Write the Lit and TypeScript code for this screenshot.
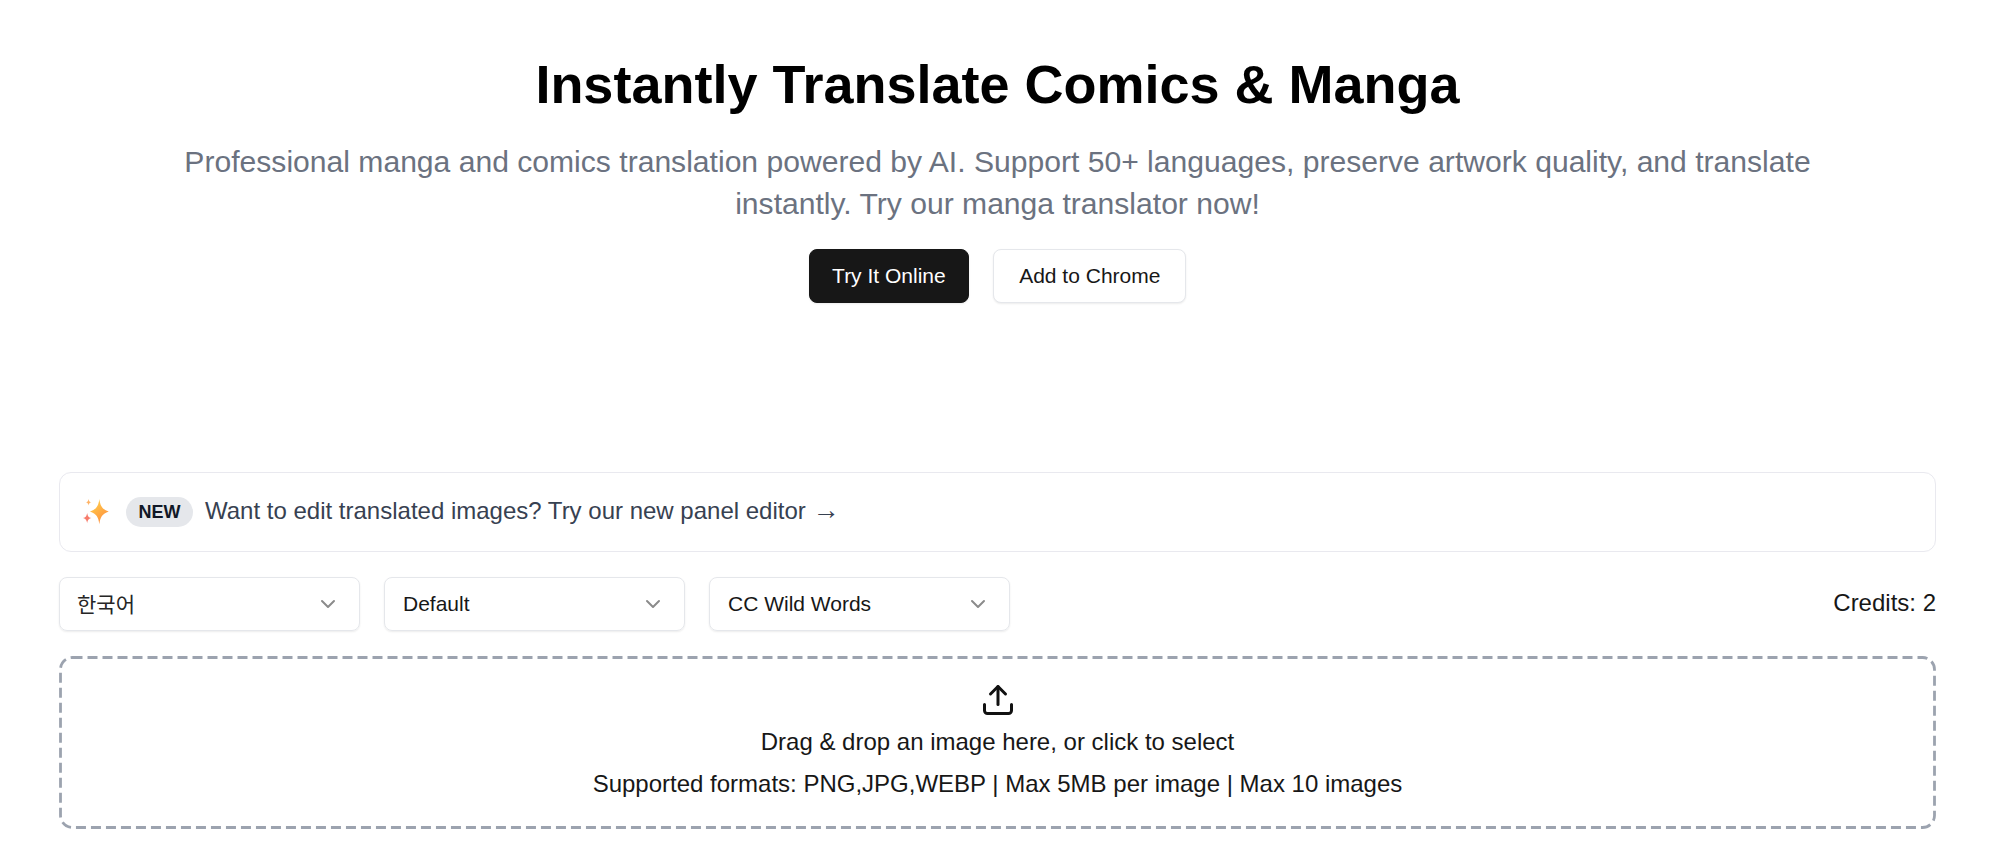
import { LitElement, html, css } from "lit";
import { customElement } from "lit/decorators.js";

const chevron = html`<svg class="chev" viewBox="0 0 24 24" fill="none" stroke="currentColor" stroke-width="2" stroke-linecap="round" stroke-linejoin="round"><path d="m6 9 6 6 6-6"/></svg>`;

@customElement("app-root")
export class AppRoot extends LitElement {
  static styles = css`
    :host { display: block; background: #fff; font-family: "Liberation Sans", Arial, sans-serif; color: #0a0a0a; height: 843px; overflow: hidden; }
    .hero { display: flex; flex-direction: column; align-items: center; padding: 48px 64px 0 59px; height: 472px; box-sizing: border-box; }
    h1 { margin: 0; font-size: 54px; line-height: 72px; font-weight: 700; color: #000; text-align: center; }
    .sub { margin: 21px 0 0; width: 1660px; font-size: 30.1px; line-height: 42px; color: #6b7280; text-align: center; }
    .btns { display: flex; gap: 24px; margin-top: 24px; }
    .btn { height: 54px; box-sizing: border-box; display: flex; align-items: center; border-radius: 8px; font-size: 21px; box-shadow: 0 1px 2px rgba(0,0,0,.08); }
    .primary { background: #171717; color: #fff; border: 1px solid #171717; padding: 0 22.500px; }
    .outline { background: #fff; color: #171717; border: 1px solid #e5e7eb; padding: 0 25px; }
    .main { padding: 0 64px 0 59px; display: flex; flex-direction: column; }
    .banner { height: 80px; box-sizing: border-box; border: 1.5px solid #e9e9ef; border-radius: 12px; display: flex; align-items: center; padding: 0 22px 2px; gap: 12px; font-size: 24px; color: #374151; }
    .spark { width: 30px; height: 30px; flex: none; margin-right: 2px; margin-top: 2px; }
    .badge { background: #e5e7eb; color: #111827; font-size: 18px; font-weight: 700; border-radius: 999px; padding: 0 12.500px; height: 30px; display: flex; align-items: center; margin-top: 2px; }
    .arrow { font-size: 27px; line-height: 1; }
    .controls { display: flex; align-items: center; gap: 24px; margin-top: 25px; }
    .select { width: 301px; height: 54px; box-sizing: border-box; border: 1px solid #e5e7eb; border-radius: 8px; box-shadow: 0 1px 2px rgba(0,0,0,.08); display: flex; align-items: center; justify-content: space-between; padding: 0 19px 0 18px; font-size: 21px; color: #171717; }
    .ko { font-family: "Noto Sans CJK KR", sans-serif; font-size: 21px; color: #262626; line-height: 24px; margin: -3px 0 0 -1px; }
    .chev { width: 24px; height: 24px; color: #8b8b8b; }
    .credits { margin-left: auto; font-size: 24px; color: #171717; padding-bottom: 2px; }
    .drop { position: relative; margin-top: 25px; height: 173px; box-sizing: border-box; display: flex; flex-direction: column; align-items: center; font-size: 24px; color: #171717; padding-top: 26px; }
    .dash { position: absolute; inset: 0; width: 100%; height: 100%; pointer-events: none; }
    .dash rect { x: 1.5px; y: 1.5px; width: calc(100% - 3px); height: calc(100% - 3px); rx: 12px; fill: none; stroke: #9ca3af; stroke-width: 2.800px; stroke-dasharray: 10 5; }
    .up { width: 36px; height: 36px; color: #111; }
    .l1 { line-height: 28px; margin-top: 10px; }
    .l2 { line-height: 28px; margin-top: 14px; }
  `;

  render() {
    return html`
      <section class="hero">
        <h1>Instantly Translate Comics &amp; Manga</h1>
        <p class="sub">Professional manga and comics translation powered by AI. Support 50+ languages, preserve artwork quality, and translate instantly. Try our manga translator now!</p>
        <div class="btns">
          <div class="btn primary">Try It Online</div>
          <div class="btn outline">Add to Chrome</div>
        </div>
      </section>
      <section class="main">
        <div class="banner">
          <svg class="spark" viewBox="0 0 32 32">
            <defs><linearGradient id="g" x1="0.2" y1="0" x2="0.8" y2="1"><stop offset="0" stop-color="#ffd24d"/><stop offset="1" stop-color="#ff8a3c"/></linearGradient></defs>
            <path fill="url(#g)" d="M18.500 2c1 7.500 3 11 10 13.500-7 2.500-9 6-10 13.500-1-7.500-3-11-10-13.500 7-2.500 9-6 10-13.500z"/>
            <path fill="#ffb366" d="M7 2c.5 2.500 1.100 3.100 3 3.500-1.900.4-2.500 1-3 3.500-.5-2.500-1.100-3.100-3-3.500 1.900-.4 2.500-1 3-3.500z"/>
            <path fill="#f77b6b" d="M5.500 17c.6 3.300 1.300 4.500 4.500 5.500-3.200 1-3.900 2.200-4.500 5.500-.6-3.300-1.300-4.500-4.500-5.500 3.200-1 3.900-2.200 4.500-5.500z"/>
          </svg>
          <span class="badge">NEW</span>
          <span>Want to edit translated images? Try our new panel editor <span class="arrow">→</span></span>
        </div>
        <div class="controls">
          <div class="select"><span class="ko">한국어</span>${chevron}</div>
          <div class="select"><span>Default</span>${chevron}</div>
          <div class="select"><span>CC Wild Words</span>${chevron}</div>
          <div class="credits">Credits: 2</div>
        </div>
        <div class="drop">
          <svg class="dash"><rect></rect></svg>
          <svg class="up" viewBox="0 0 24 24" fill="none" stroke="currentColor" stroke-width="2" stroke-linecap="round" stroke-linejoin="round"><path d="M21 15v4a2 2 0 0 1-2 2H5a2 2 0 0 1-2-2v-4"/><path d="m17 8-5-5-5 5"/><path d="M12 3v12"/></svg>
          <div class="l1">Drag &amp; drop an image here, or click to select</div>
          <div class="l2">Supported formats: PNG,JPG,WEBP | Max 5MB per image | Max 10 images</div>
        </div>
      </section>
    `;
  }
}
